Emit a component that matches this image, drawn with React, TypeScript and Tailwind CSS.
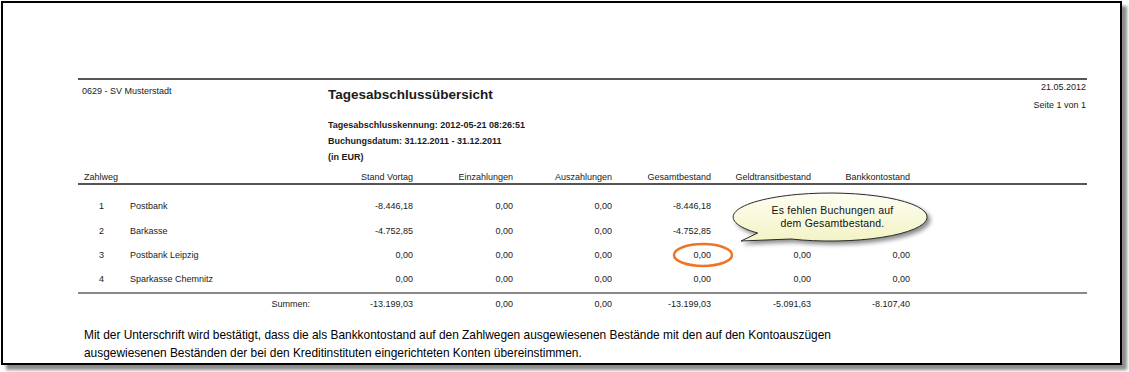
import React from 'react';

const cols = ['Stand Vortag', 'Einzahlungen', 'Auszahlungen', 'Gesamtbestand', 'Geldtransitbestand', 'Bankkontostand'];

const rows = [
  { nr: '1', name: 'Postbank', values: ['-8.446,18', '0,00', '0,00', '-8.446,18', '', ''] },
  { nr: '2', name: 'Barkasse', values: ['-4.752,85', '0,00', '0,00', '-4.752,85', '', ''] },
  { nr: '3', name: 'Postbank Leipzig', values: ['0,00', '0,00', '0,00', '0,00', '0,00', '0,00'] },
  { nr: '4', name: 'Sparkasse Chemnitz', values: ['0,00', '0,00', '0,00', '0,00', '0,00', '0,00'] },
];

const sums = ['-13.199,03', '0,00', '0,00', '-13.199,03', '-5.091,63', '-8.107,40'];

// grid: nr | name | 6 zahlen-spalten (rechtsbündig)
const grid = 'grid grid-cols-[52px_183px_100px_100px_99px_99px_100px_99px]';

const App = () => {
  return (
    <div className="w-[1129px] h-[372px] bg-white pt-[1px] pl-[1px] font-['Liberation_Sans',Arial,sans-serif] text-[#1a1a1a]">
      <div className="relative w-[1121px] h-[364px] border-2 border-black bg-white shadow-[5px_5px_3px_rgba(0,0,0,0.45)] pl-[75px] pt-[75px]">
        <div className="w-[1009px]">
          {/* Kopf */}
          <div className="h-[2px] bg-[#555]" />
          <div className="flex items-start">
            <div className="w-[250px] pl-[4px] pt-[5px] text-[9px] leading-[12px]">0629 - SV Musterstadt</div>
            <div className="flex flex-col">
              <div className="pt-[6px] text-[13.5px] leading-[18px] font-bold">Tagesabschlussübersicht</div>
              <div className="mt-[13px] text-[9px] leading-[16px] font-bold">
                <div>Tagesabschlusskennung: 2012-05-21 08:26:51</div>
                <div>Buchungsdatum: 31.12.2011 - 31.12.2011</div>
                <div>(in EUR)</div>
              </div>
            </div>
            <div className="flex-1 pr-[1px] pt-[1px] text-right text-[9px] leading-[12px]">
              <div>21.05.2012</div>
              <div className="mt-[6px]">Seite 1 von 1</div>
            </div>
          </div>

          {/* Tabelle */}
          <div className={`${grid} mt-[7px] h-[11px] text-[9px] leading-[11px]`}>
            <div className="col-span-2 pl-[6px]">Zahlweg</div>
            {cols.map((c) => (
              <div key={c} className="text-right">
                {c}
              </div>
            ))}
          </div>
          <div className="h-[2px] bg-[#555]" />
          <div className="pt-[10px]">
            {rows.map((r) => (
              <div key={r.nr} className={`${grid} h-[24.3px] items-center text-[9px]`}>
                <div className="pl-[21px]">{r.nr}</div>
                <div>{r.name}</div>
                {r.values.map((v, i) => (
                  <div key={i} className="text-right">
                    {v}
                  </div>
                ))}
              </div>
            ))}
          </div>
          <div className="h-[2px] bg-[#8a8a8a]" />
          <div className={`${grid} mt-[3px] h-[16px] items-center text-[9px]`}>
            <div />
            <div className="text-right pr-[3px]">Summen:</div>
            {sums.map((v, i) => (
              <div key={i} className="text-right">
                {v}
              </div>
            ))}
          </div>

          <p className="mt-[13px] pl-[6px] text-[11.9px] leading-[18px] text-black">
            Mit der Unterschrift wird bestätigt, dass die als Bankkontostand auf den Zahlwegen ausgewiesenen Bestände mit den auf den Kontoauszügen
            <br />
            ausgewiesenen Beständen der bei den Kreditinstituten eingerichteten Konten übereinstimmen.
          </p>
        </div>

        {/* Markierung */}
        <svg className="absolute left-[667px] top-[238px]" width="66" height="28" viewBox="0 0 66 28">
          <ellipse cx="33" cy="14" rx="29" ry="11" fill="none" stroke="#f07424" strokeWidth="2.5" />
        </svg>

        {/* Sprechblase */}
        <div className="absolute left-[722px] top-[185px] w-[215px] h-[62px]">
          <svg className="absolute inset-0 drop-shadow-[3px_3px_2px_rgba(0,0,0,0.45)]" width="215" height="62" viewBox="0 0 215 62">
            <defs>
              <linearGradient id="bubble" x1="0" y1="0" x2="0" y2="1">
                <stop offset="0" stopColor="#fefef2" />
                <stop offset="1" stopColor="#f3f3c6" />
              </linearGradient>
            </defs>
            <path
              d="M 66 51 L 16 53 L 32.7 45 A 97 24 0 1 1 66 51 Z"
              fill="url(#bubble)"
              stroke="#2a2a2a"
              strokeWidth="1"
            />
          </svg>
          <div className="absolute left-[10px] top-[16px] w-[195px] text-center text-[10.5px] leading-[13px] tracking-[0.2px] text-[#111]">
            Es fehlen Buchungen auf
            <br />
            dem Gesamtbestand.
          </div>
        </div>
      </div>
    </div>
  );
};

export default App;
